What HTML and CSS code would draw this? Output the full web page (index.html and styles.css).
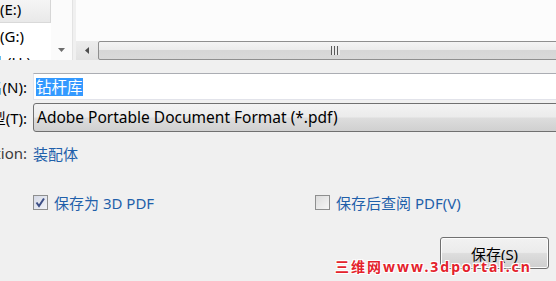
FILE: index.html
```html
<!DOCTYPE html>
<html lang="zh-CN">
<head>
  <meta charset="UTF-8">
  <title>另存为</title>
  <link rel="stylesheet" href="styles.css">
</head>
<body>
  <div class="browser">
    <div class="nav">
      <ul class="nav-list">
        <li class="nav-item is-selected">(E:)</li>
        <li class="nav-item">(G:)</li>
        <li class="nav-item nav-item--cut">盘 (H:)</li>
      </ul>
      <div class="vscroll">
        <svg class="arrow" width="7" height="4" viewBox="0 0 7 4"><path d="M0 0h7L3.5 4z" fill="#6d6d6d"/></svg>
      </div>
    </div>
    <div class="files">
      <div class="file-area"></div>
      <div class="hscroll">
        <div class="hscroll-btn">
          <svg width="4" height="7" viewBox="0 0 4 7"><path d="M4 0v7L0 3.5z" fill="#4d4d4d"/></svg>
        </div>
        <div class="hscroll-thumb">
          <span class="grip"></span>
        </div>
      </div>
    </div>
  </div>

  <div class="form">
    <div class="row row--name">
      <label class="row-label"><span>文件名(N):</span></label>
      <div class="text-input"><span class="selected">钻杆库</span></div>
    </div>
    <div class="row row--type">
      <label class="row-label"><span>保存类型(T):</span></label>
      <div class="select">Adobe Portable Document Format (*.pdf)</div>
    </div>
    <div class="row row--meta">
      <span class="row-label row-label--muted"><span>Configuration:</span></span>
      <span class="meta-value">装配体</span>
    </div>
    <div class="options">
      <label class="check check--first">
        <span class="box">
          <svg width="13" height="13" viewBox="0 0 13 13"><path d="M2.5 6.5l2.5 3.5 5-7.5" fill="none" stroke="#3d4f86" stroke-width="2"/></svg>
        </span>
        保存为 3D PDF
      </label>
      <label class="check">
        <span class="box"></span>
        保存后查阅 PDF(V)
      </label>
    </div>
    <div class="actions">
      <button class="btn">保存(S)</button>
    </div>
  </div>

  <div class="watermark">三维网www.3dportal.cn</div>
</body>
</html>
```

FILE: styles.css
```css
html, body {
  margin: 0;
  height: 100%;
}
body {
  background-color: #f0f0f0;
  font-family: "Noto Sans", "Noto Sans CJK SC", sans-serif;
  font-size: 15px;
  color: #000;
  overflow: hidden;
  position: relative;
}

/* 上方：导航窗格 + 文件列表 */
.browser {
  display: flex;
  height: 60px;
}
.nav {
  display: flex;
  width: 72px;
  background: #fff;
  border-right: 1px solid #e3e3e3;
  overflow: hidden;
}
.nav-list {
  list-style: none;
  margin: -4px 0 0 0;
  padding: 0;
  width: 51px;
}
.nav-item {
  height: 26px;
  line-height: 26px;
  white-space: nowrap;
}
.nav-item.is-selected {
  background: linear-gradient(#f7f7f7, #e9e9e9);
  border-right: 1px solid #d6d6d6;
  border-bottom: 1px solid #d9d9d9;
}
.nav-item--cut {
  margin-left: -12px;
}
.vscroll {
  width: 21px;
  display: flex;
  align-items: flex-end;
  justify-content: center;
  padding-bottom: 8px;
  box-sizing: border-box;
  background: #fbfbfb;
}
.files {
  flex: 1;
  margin-left: 3px;
  display: flex;
  flex-direction: column;
  background: #fcfcfc;
}
.file-area {
  flex: 1;
}
.hscroll {
  height: 19px;
  display: flex;
  background: linear-gradient(#ececec, #e2e2e2);
}
.hscroll-btn {
  width: 22px;
  display: flex;
  align-items: center;
  justify-content: center;
}
.hscroll-thumb {
  flex: 1;
  margin-right: -4px;
  border: 1px solid #8f8f8f;
  border-radius: 2px;
  background: linear-gradient(#f4f4f4 0%, #ececec 45%, #d6d6d6 50%, #d9d9d9 100%);
  position: relative;
}
.grip {
  position: absolute;
  left: 232px;
  top: 4px;
  width: 9px;
  height: 9px;
  background: repeating-linear-gradient(90deg, #5a5a5a 0 1px, #eaeaea 1px 3px);
}

/* 表单 */
.form {
  display: flex;
  flex-direction: column;
}
.row {
  display: flex;
  align-items: center;
}
.row-label {
  width: 33px;
  flex-shrink: 0;
  padding-right: 6px;
  box-sizing: border-box;
  display: flex;
  justify-content: flex-end;
  overflow: hidden;
  white-space: nowrap;
}
.row-label--muted {
  color: #3c3c3c;
}
.row--name {
  margin-top: 13px;
  height: 27px;
}
.text-input {
  flex: 1;
  height: 27px;
  margin-right: -10px;
  box-sizing: border-box;
  background: #fff;
  border: 1px solid #e2e3ea;
  border-top-color: #abadb3;
  padding: 3px 2px;
  display: flex;
  align-items: center;
}
.selected {
  background: #3399ff;
  color: #fff;
  line-height: 18px;
  font-size: 15.5px;
}
.row--type {
  margin-top: 3px;
  height: 29px;
}
.select {
  flex: 1;
  height: 29px;
  margin-right: -10px;
  box-sizing: border-box;
  border: 1px solid #707070;
  border-radius: 3px;
  background: linear-gradient(#f3f3f3 0%, #ebebeb 48%, #dddddd 52%, #d0d0d0 100%);
  padding-left: 3px;
  font-size: 15.5px;
  line-height: 27px;
  white-space: nowrap;
}
.row--meta {
  margin-top: 11px;
  height: 20px;
}
.meta-value {
  color: #1f60aa;
}
.options {
  display: flex;
  margin-top: 29px;
  height: 20px;
  align-items: center;
}
.check {
  display: flex;
  align-items: center;
  gap: 6px;
  color: #1f60aa;
  white-space: nowrap;
}
.check--first {
  margin-left: 33px;
  width: 282px;
}
.box {
  width: 15px;
  height: 15px;
  box-sizing: border-box;
  border: 1px solid #8e8f8f;
  background: linear-gradient(135deg, #dcdcdc, #f6f6f6);
  display: flex;
  align-items: center;
  justify-content: center;
}
.check--first .box {
  background: linear-gradient(135deg, #d5d9e6, #f2f4f8);
}
.actions {
  display: flex;
  justify-content: flex-end;
  margin-top: 25px;
  padding-right: 7px;
}
.btn {
  width: 109px;
  height: 32px;
  font: inherit;
  color: #000;
  border: 1px solid #707070;
  border-radius: 3px;
  background: linear-gradient(#f2f2f2 0%, #ebebeb 48%, #dddddd 52%, #cfcfcf 100%);
  box-shadow: inset 0 0 0 1px #fcfcfc;
}

/* 水印 */
.watermark {
  position: absolute;
  left: 335px;
  top: 256px;
  font-size: 14px;
  font-weight: bold;
  letter-spacing: 2px;
  color: #e4222c;
  text-shadow: -1px -1px 0 #fff, 1px -1px 0 #fff, -1px 1px 0 #fff, 1px 1px 0 #fff;
  white-space: nowrap;
}
```
